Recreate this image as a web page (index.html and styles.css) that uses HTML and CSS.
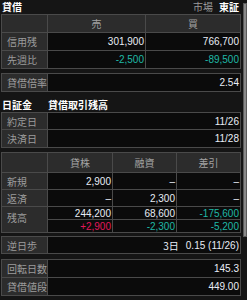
FILE: index.html
```html
<!DOCTYPE html>
<html lang="ja">
<head>
<meta charset="utf-8">
<link rel="stylesheet" href="styles.css">
</head>
<body>
<div class="page">
  <div class="main">
    <div class="topbar">
      <span class="title">貸借</span>
      <span class="market"><span class="mk-label">市場</span><span class="mk-val">東証</span></span>
    </div>

    <div class="grid g3 t1">
      <div class="cell hd"></div>
      <div class="cell hd">売</div>
      <div class="cell hd">買</div>
      <div class="cell lb">信用残</div>
      <div class="cell val">301,900</div>
      <div class="cell val">766,700</div>
      <div class="cell lb">先週比</div>
      <div class="cell val neg">-2,500</div>
      <div class="cell val neg">-89,500</div>
    </div>

    <div class="grid g2 t2">
      <div class="cell lb">貸借倍率</div>
      <div class="cell val">2.54</div>
    </div>

    <div class="section">
      <span class="sec-a">日証金</span>
      <span class="sec-b">貸借取引残高</span>
    </div>

    <div class="grid g2 t3">
      <div class="cell lb">約定日</div>
      <div class="cell val">11/26</div>
      <div class="cell lb">決済日</div>
      <div class="cell val">11/28</div>
    </div>

    <div class="grid g4 t4">
      <div class="cell hd"></div>
      <div class="cell hd">貸株</div>
      <div class="cell hd">融資</div>
      <div class="cell hd">差引</div>
      <div class="cell lb">新規</div>
      <div class="cell val">2,900</div>
      <div class="cell val">–</div>
      <div class="cell val">–</div>
      <div class="cell lb">返済</div>
      <div class="cell val">–</div>
      <div class="cell val">2,300</div>
      <div class="cell val">–</div>
      <div class="cell lb span2">残高</div>
      <div class="cell val">244,200</div>
      <div class="cell val">68,600</div>
      <div class="cell val neg">-175,600</div>
      <div class="cell val pos">+2,900</div>
      <div class="cell val neg">-2,300</div>
      <div class="cell val neg">-5,200</div>
    </div>

    <div class="grid g2 t5">
      <div class="cell lb">逆日歩</div>
      <div class="cell val"><span class="days">3日</span><span>0.15 (11/26)</span></div>
    </div>

    <div class="grid g2 t6">
      <div class="cell lb">回転日数</div>
      <div class="cell val">145.3</div>
      <div class="cell lb">貸借値段</div>
      <div class="cell val">449.00</div>
    </div>
  </div>
  <div class="scrollbar"><div class="thumb"></div></div>
</div>
</body>
</html>
```

FILE: styles.css
```css
html, body {
  margin: 0;
  padding: 0;
  background: #151515;
}
body {
  font-family: "Liberation Sans", "Noto Sans CJK JP", sans-serif;
  font-size: 10px;
  color: #e8edf6;
  width: 247px;
  height: 300px;
  overflow: hidden;
}
.page {
  display: flex;
  align-items: flex-start;
}
.main {
  margin-left: 1px;
  width: 240px;
}
.topbar {
  height: 14px;
  display: flex;
  justify-content: space-between;
  align-items: center;
  padding-left: 1px;
  padding-right: 2px;
  font-family: "Noto Sans CJK JP", sans-serif;
  font-size: 10px;
  line-height: 14px;
}
.title {
  font-weight: bold;
  color: #ffffff;
  margin-top: -1px;
}
.market {
  display: flex;
  gap: 6px;
}
.mk-label {
  color: #9a9a9a;
}
.mk-val {
  color: #ffffff;
  font-weight: bold;
}
.grid {
  display: grid;
  gap: 1px;
  padding: 1px;
  background: #4a4a4a;
}
.g2 { grid-template-columns: 45px 1fr; }
.g3 { grid-template-columns: 45px 97px 94px; }
.g4 { grid-template-columns: 45px 64px 63px 63px; }
.t1 { grid-template-rows: 17px 17px 17px; }
.t2 { margin-top: 4px; grid-template-rows: 17px; }
.t3 { grid-template-rows: 16px 17px; }
.t4 { margin-top: 4px; grid-template-rows: 19px 16px 16px 12px 12px; }
.t5 { margin-top: 3px; grid-template-rows: 16px; }
.t6 { margin-top: 5px; grid-template-rows: 17px 17px; }
.cell {
  display: flex;
  align-items: center;
  overflow: hidden;
  white-space: nowrap;
}
.hd {
  background: #2c2c2c;
  color: #a3a3a3;
  justify-content: center;
  font-family: "Noto Sans CJK JP", sans-serif;
  font-size: 10px;
}
.lb {
  background: #2c2c2c;
  color: #9c9c9c;
  padding-left: 5px;
  font-family: "Noto Sans CJK JP", sans-serif;
  font-size: 10px;
}
.span2 {
  grid-row: span 2;
  padding-bottom: 4px;
}
.val {
  background: #0b0b0b;
  justify-content: flex-end;
  padding-right: 1px;
  color: #e8edf6;
}
.neg { color: #1fb8a6; }
.pos { color: #e2175a; }
.days {
  margin-right: 7px;
  font-family: "Noto Sans CJK JP", sans-serif;
}
.section {
  height: 20px;
  display: flex;
  align-items: flex-end;
  font-family: "Noto Sans CJK JP", sans-serif;
  font-size: 10px;
  font-weight: bold;
  color: #ffffff;
  line-height: 14px;
}
.sec-a {
  width: 47px;
  padding-left: 1px;
  box-sizing: border-box;
}
.scrollbar {
  margin-left: 2px;
  width: 4px;
  padding-top: 3px;
}
.thumb {
  width: 4px;
  height: 234px;
  background: #8a8a8a;
  border: 1px solid #5a5a5a;
  box-sizing: border-box;
}
```
